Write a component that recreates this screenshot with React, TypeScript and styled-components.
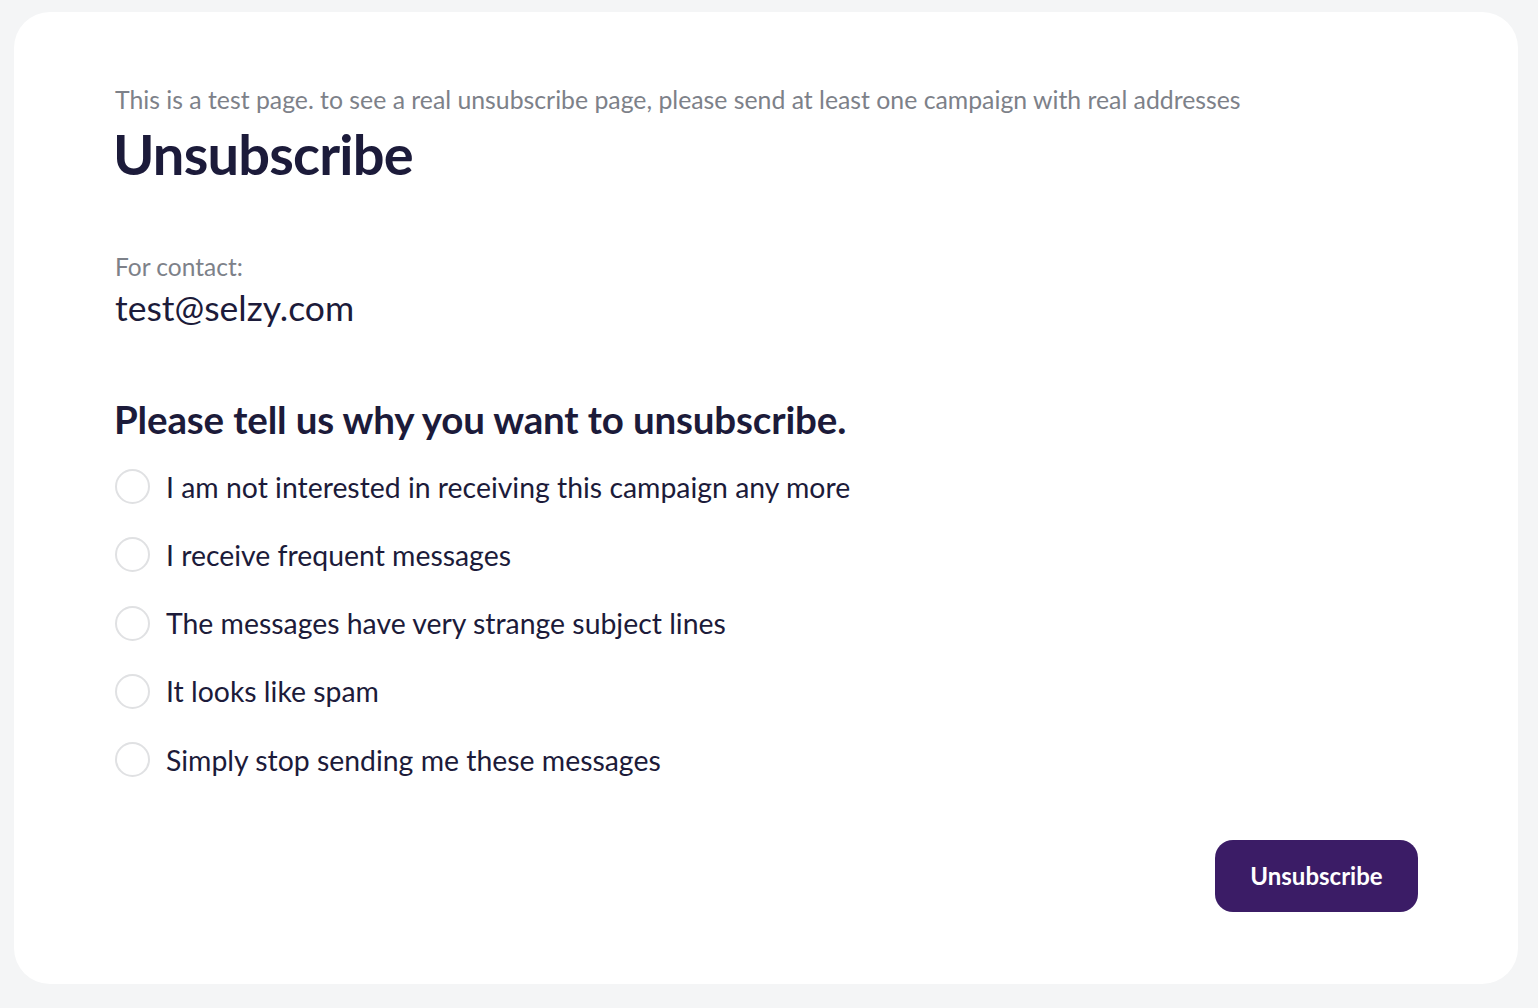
import React, { useState } from 'react';
import styled, { createGlobalStyle } from 'styled-components';

const reasons = [
	'I am not interested in receiving this campaign any more',
	'I receive frequent messages',
	'The messages have very strange subject lines',
	'It looks like spam',
	'Simply stop sending me these messages',
];

const App = () => {
	const [selected, setSelected] = useState<number | null>(null);
	return (
		<>
			<GlobalStyle />
			<Page>
				<Card>
					<TestNote>
						This is a test page. to see a real unsubscribe page, please send at least one campaign with real addresses
					</TestNote>
					<Title>Unsubscribe</Title>
					<ContactBlock>
						<ContactLabel>For contact:</ContactLabel>
						<ContactEmail>test@selzy.com</ContactEmail>
					</ContactBlock>
					<Question>Please tell us why you want to unsubscribe.</Question>
					<ReasonList>
						{reasons.map((reason, i) => (
							<ReasonRow key={reason} onClick={() => setSelected(i)}>
								<Radio $checked={selected === i} />
								<ReasonText>{reason}</ReasonText>
							</ReasonRow>
						))}
					</ReasonList>
					<Footer>
						<SubmitButton>Unsubscribe</SubmitButton>
					</Footer>
				</Card>
			</Page>
		</>
	);
};

export default App;

const GlobalStyle = createGlobalStyle`
	* {
		box-sizing: border-box;
	}
	body {
		margin: 0;
		background: #f4f5f6;
		font-family: Lato, "Open Sans", sans-serif;
	}
`;

const Page = styled.div`
	padding: 12px 20px 24px 14px;
`;

const Card = styled.div`
	height: 972px;
	background: #ffffff;
	border-radius: 36px;
	padding: 73px 100px 0 101px;
	display: flex;
	flex-direction: column;
`;

// 안내 문구, 제목
const TestNote = styled.p`
	margin: 0;
	font-size: 24.8px;
	line-height: 30px;
	color: #7d8189;
`;

const Title = styled.h1`
	margin: 8px 0 0 -2px;
	font-size: 56px;
	line-height: 62px;
	font-weight: 700;
	color: #1c1b3a;
	letter-spacing: -0.8px;
`;

// 연락처
const ContactBlock = styled.div`
	margin-top: 68px;
	display: flex;
	flex-direction: column;
`;

const ContactLabel = styled.span`
	font-size: 24.5px;
	line-height: 28px;
	color: #7d8189;
`;

const ContactEmail = styled.span`
	margin-top: 6px;
	font-size: 35.5px;
	line-height: 42px;
	color: #1c1b3a;
`;

const Question = styled.h2`
	margin: 67px 0 0 -1px;
	font-size: 38.5px;
	line-height: 46px;
	font-weight: 700;
	color: #1c1b3a;
	letter-spacing: -0.15px;
`;

// 사유 목록
const ReasonList = styled.div`
	margin-top: 27px;
	display: flex;
	flex-direction: column;
	gap: 33.25px;
`;

const ReasonRow = styled.label`
	display: flex;
	align-items: center;
	gap: 16px;
	cursor: pointer;
`;

const Radio = styled.span<{ $checked: boolean }>`
	width: 35px;
	height: 35px;
	flex-shrink: 0;
	border-radius: 50%;
	border: 2px solid ${(p) => (p.$checked ? '#3a1d66' : '#e0e1e3')};
	box-shadow: ${(p) => (p.$checked ? 'inset 0 0 0 7px #fff, inset 0 0 0 20px #3a1d66' : 'none')};
`;

const ReasonText = styled.span`
	font-size: 28.4px;
	line-height: 34px;
	color: #1c1b3a;
`;

const Footer = styled.div`
	margin-top: 62.5px;
	display: flex;
	justify-content: flex-end;
`;

const SubmitButton = styled.button`
	width: 203px;
	height: 72px;
	border: none;
	border-radius: 18px;
	background: #3b1c66;
	color: #ffffff;
	font-family: Lato, "Open Sans", sans-serif;
	font-size: 24px;
	font-weight: 700;
	cursor: pointer;
`;
